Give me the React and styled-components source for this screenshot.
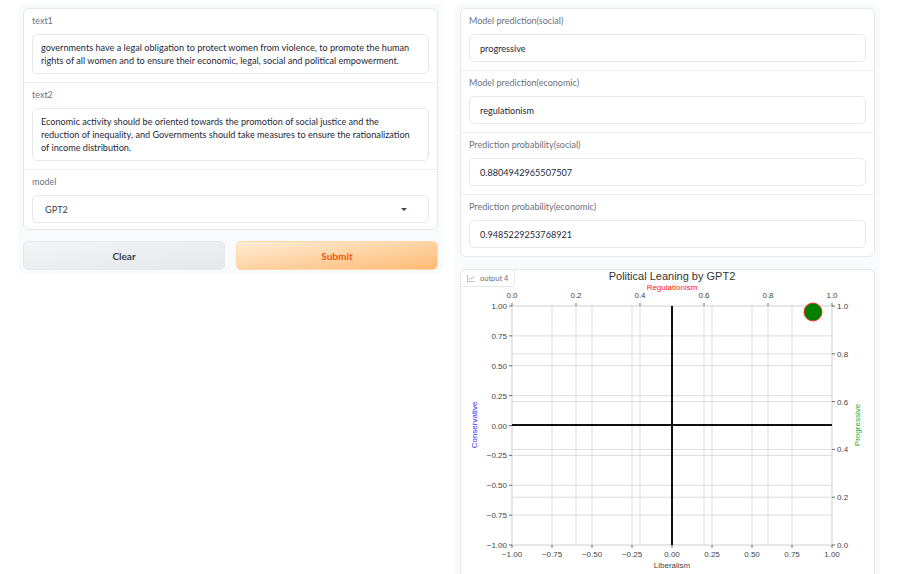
import React from "react";
import styled, { createGlobalStyle } from "styled-components";

const GlobalStyle = createGlobalStyle`
  body {
    margin: 0;
    background: #ffffff;
    font-family: "Lato", "Noto Sans", sans-serif;
  }
`;

const leftFields = [
  {
    label: "text1",
    value:
      "governments have a legal obligation to protect women from violence, to promote the human rights of all women and to ensure their economic, legal, social and political empowerment.",
  },
  {
    label: "text2",
    value:
      "Economic activity should be oriented towards the promotion of social justice and the reduction of inequality, and Governments should take measures to ensure the rationalization of income distribution.",
  },
];

const outputs = [
  { label: "Model prediction(social)", value: "progressive" },
  { label: "Model prediction(economic)", value: "regulationism" },
  { label: "Prediction probability(social)", value: "0.8804942965507507" },
  { label: "Prediction probability(economic)", value: "0.9485229253768921" },
];

// axis geometry in page pixels
const X0 = 513;
const X1 = 833;
const Y0 = 306;
const Y1 = 545;
const bottomTicks = [-1, -0.75, -0.5, -0.25, 0, 0.25, 0.5, 0.75, 1];
const leftTicks = [1, 0.75, 0.5, 0.25, 0, -0.25, -0.5, -0.75, -1];
const topTicks = [0, 0.2, 0.4, 0.6, 0.8, 1];
const rightTicks = [1, 0.8, 0.6, 0.4, 0.2, 0];

const sx = (v) => X0 + ((v + 1) / 2) * (X1 - X0);
const sy = (v) => Y1 - ((v + 1) / 2) * (Y1 - Y0);
const tx = (v) => X0 + v * (X1 - X0);
const ty = (v) => Y1 - v * (Y1 - Y0);
const fmt2 = (v) => (v < 0 ? "\u2212" : "") + Math.abs(v).toFixed(2);

function LeaningChart() {
  return (
    <ChartSvg viewBox="461 269 413 310" width="413" height="310">
      <g stroke="#dddddd" strokeWidth="1">
        {bottomTicks.map((v) => (
          <line key={"bx" + v} x1={sx(v)} x2={sx(v)} y1={Y0} y2={Y1} />
        ))}
        {topTicks.map((v) => (
          <line key={"tx" + v} x1={tx(v)} x2={tx(v)} y1={Y0} y2={Y1} />
        ))}
        {leftTicks.map((v) => (
          <line key={"ly" + v} x1={X0} x2={X1} y1={sy(v)} y2={sy(v)} />
        ))}
        {rightTicks.map((v) => (
          <line key={"ry" + v} x1={X0} x2={X1} y1={ty(v)} y2={ty(v)} />
        ))}
      </g>
      <g stroke="#444" strokeWidth="0.8">
        {bottomTicks.map((v) => (
          <line key={"bt" + v} x1={sx(v)} x2={sx(v)} y1={Y1} y2={Y1 + 3} />
        ))}
        {topTicks.map((v) => (
          <line key={"tt" + v} x1={tx(v)} x2={tx(v)} y1={Y0 - 3} y2={Y0} />
        ))}
        {leftTicks.map((v) => (
          <line key={"lt" + v} x1={X0 - 3} x2={X0} y1={sy(v)} y2={sy(v)} />
        ))}
        {rightTicks.map((v) => (
          <line key={"rt" + v} x1={X1} x2={X1 + 3} y1={ty(v)} y2={ty(v)} />
        ))}
      </g>
      <line x1={673} x2={673} y1={Y0} y2={Y1} stroke="#111" strokeWidth="2" />
      <line x1={X0} x2={X1} y1={425} y2={425} stroke="#111" strokeWidth="2" />
      <circle cx="814" cy="312" r="9" fill="#008000" stroke="#ff3030" strokeWidth="1" />

      <g fontFamily="Liberation Sans, Arial, sans-serif" fontSize="8" fill="#444">
        {bottomTicks.map((v) => (
          <text key={"bl" + v} x={sx(v)} y={Y1 + 12} textAnchor="middle">
            {fmt2(v)}
          </text>
        ))}
        {topTicks.map((v) => (
          <text key={"tl" + v} x={tx(v)} y={Y0 - 8} textAnchor="middle">
            {v.toFixed(1)}
          </text>
        ))}
        {leftTicks.map((v) => (
          <text key={"ll" + v} x={X0 - 5} y={sy(v) + 3} textAnchor="end">
            {fmt2(v)}
          </text>
        ))}
        {rightTicks.map((v) => (
          <text key={"rl" + v} x={X1 + 5} y={ty(v) + 3} textAnchor="start">
            {v.toFixed(1)}
          </text>
        ))}
        <text x="673" y="568" textAnchor="middle">Liberalism</text>
      </g>
      <g fontFamily="Liberation Sans, Arial, sans-serif">
        <text x="673" y="279.5" textAnchor="middle" fontSize="11" fill="#333">
          Political Leaning by GPT2
        </text>
        <text x="673" y="289.5" textAnchor="middle" fontSize="8" fill="#ff2020">
          Regulationism
        </text>
        <text
          x="478"
          y="425"
          textAnchor="middle"
          fontSize="8"
          fill="#3333ff"
          transform="rotate(-90 478 425)"
        >
          Conservative
        </text>
        <text
          x="861"
          y="425"
          textAnchor="middle"
          fontSize="8"
          fill="#22aa22"
          transform="rotate(-90 861 425)"
        >
          Progressive
        </text>
      </g>
    </ChartSvg>
  );
}

function App() {
  return (
    <Page>
      <GlobalStyle />
      <Column>
        <Card>
          {leftFields.map((f) => (
            <Section key={f.label}>
              <Label>{f.label}</Label>
              <TextArea>{f.value}</TextArea>
            </Section>
          ))}
          <Section $tight>
            <Label>model</Label>
            <Select>
              <span>GPT2</span>
              <Caret />
            </Select>
          </Section>
        </Card>
        <ButtonRow>
          <Button>Clear</Button>
          <Button $primary>Submit</Button>
        </ButtonRow>
      </Column>
      <Column $tall>
        <Card>
          {outputs.map((o) => (
            <Section key={o.label}>
              <Label>{o.label}</Label>
              <Output>{o.value}</Output>
            </Section>
          ))}
        </Card>
        <PlotCard>
          <Badge>
            <svg width="8" height="8" viewBox="0 0 16 16" fill="none" stroke="#9ca3af" strokeWidth="1.4">
              <path d="M1 1v14h14" />
              <path d="M4 12l3-4 3 2 4-6" />
            </svg>
            output 4
          </Badge>
          <LeaningChart />
        </PlotCard>
      </Column>
    </Page>
  );
}

const Page = styled.div`
  display: grid;
  grid-template-columns: 425px 425px;
  gap: 12px;
  padding: 3px 0 0 18px;
  height: 574px;
  box-sizing: border-box;
  overflow: hidden;
  align-items: start;
`;

const Column = styled.div`
  background: #f9fafb;
  border-radius: 8px;
  padding: 5px 5px ${(p) => (p.$tall ? "40px" : "4px")} 5px;
  display: flex;
  flex-direction: column;
  gap: ${(p) => (p.$tall ? "12px" : "11px")};
`;

const Card = styled.div`
  background: #ffffff;
  border: 1px solid #e5e7eb;
  border-radius: 6px;
  overflow: hidden;
`;

const Section = styled.div`
  padding: ${(p) => (p.$tight ? "6px 8px 6px" : "6px 8px 8px")};
  & + & {
    border-top: 1px solid #eceef1;
  }
`;

const Label = styled.div`
  font-size: 9px;
  line-height: 12px;
  color: #6b7280;
  margin-bottom: 7px;
`;

const TextArea = styled.div`
  border: 1px solid #e5e7eb;
  border-radius: 5px;
  padding: 6px 14px 6px 8px;
  font-size: 9.15px;
  line-height: 13px;
  color: #1f2937;
`;

const Output = styled(TextArea)`
  box-sizing: border-box;
  display: flex;
  align-items: center;
  padding: 0 10px;
  height: 28px;
`;

const Select = styled(TextArea)`
  display: flex;
  align-items: center;
  justify-content: space-between;
  height: 28px;
  box-sizing: border-box;
  padding: 0 21px 0 12px;
  color: #374151;
`;

const Caret = styled.span`
  width: 0;
  height: 0;
  border-left: 3px solid transparent;
  border-right: 3px solid transparent;
  border-top: 3.5px solid #374151;
`;

const ButtonRow = styled.div`
  display: grid;
  grid-template-columns: 1fr 1fr;
  gap: 11px;
`;

const Button = styled.div`
  height: 29px;
  border-radius: 5px;
  display: flex;
  align-items: center;
  justify-content: center;
  font-size: 10px;
  font-weight: 700;
  color: ${(p) => (p.$primary ? "#ea580c" : "#374151")};
  background: ${(p) =>
    p.$primary
      ? "linear-gradient(to bottom right, #ffedd5, #fdba74)"
      : "linear-gradient(to bottom right, #f3f4f6, #e5e7eb)"};
  border: 1px solid ${(p) => (p.$primary ? "#fed7aa" : "#e5e7eb")};
  box-sizing: border-box;
`;

const PlotCard = styled.div`
  position: relative;
  background: #ffffff;
  border: 1px solid #e5e7eb;
  border-radius: 6px;
  height: 330px;
`;

const Badge = styled.div`
  position: absolute;
  left: 0;
  top: 0;
  z-index: 1;
  display: flex;
  align-items: center;
  gap: 5px;
  height: 16px;
  padding: 0 6px;
  font-size: 7.5px;
  color: #6b7280;
  background: #ffffff;
  border-right: 1px solid #e5e7eb;
  border-bottom: 1px solid #e5e7eb;
  border-top-left-radius: 6px;
  border-bottom-right-radius: 5px;
`;

const ChartSvg = styled.svg`
  display: block;
  margin: -1px 0 0 -1px;
  overflow: visible;
`;

export default App;
